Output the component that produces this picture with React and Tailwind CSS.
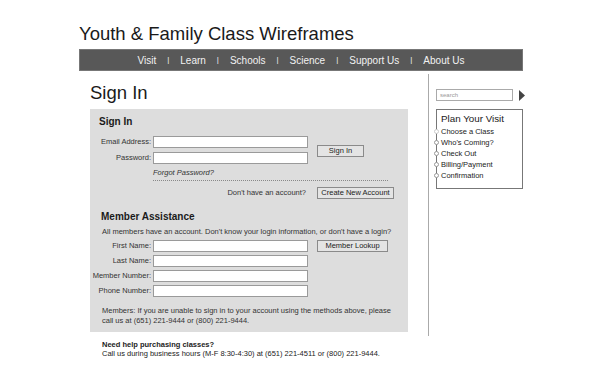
export default function App() {
  const navItems = ['Visit', 'Learn', 'Schools', 'Science', 'Support Us', 'About Us'];
  const steps = ['Choose a Class', "Who's Coming?", 'Check Out', 'Billing/Payment', 'Confirmation'];
  const inputCls = 'w-[155px] h-[12px] bg-white border border-[#9a9a9a]';
  const btnCls = 'h-[12px] bg-[#e4e4e4] border border-[#8a8a8a] text-[7.5px] leading-[10px] text-[#222] whitespace-nowrap text-center';

  return (
    <div className="w-[602px] h-[377px] bg-white text-[#222] overflow-hidden" style={{ fontFamily: '"Liberation Sans", Arial, sans-serif' }}>
      <div className="ml-[79px] w-[444px]">
        <h1 className="pt-[23px] text-[18.5px] leading-[22px] text-[#1a1a1a]">Youth &amp; Family Class Wireframes</h1>

        <nav className="mt-[4px] h-[22px] bg-[#585858] border border-[#777] flex items-center justify-center text-[10px] text-[#f2f2f2]">
          {navItems.map((item, i) => (
            <span key={item} className="flex items-center">
              {i > 0 && <span className="mx-[11px] text-[8px]">|</span>}
              {item}
            </span>
          ))}
        </nav>

        <div className="flex">
          {/* main column */}
          <div className="w-[349px] shrink-0 pl-[11px]">
            <h2 className="mt-[10px] text-[18.5px] leading-[24px] text-[#1a1a1a]">Sign In</h2>

            <div className="mt-[4px] w-[318px] h-[223px] bg-[#dddddd] pt-[7px] text-[7.5px] leading-[10px] text-[#333]">
              <h3 className="ml-[9px] text-[10px] font-bold leading-[12px] text-[#1a1a1a]">Sign In</h3>

              <div className="mt-[8px] flex">
                <div className="flex flex-col gap-[4px]">
                  <div className="flex items-center">
                    <span className="w-[63px] text-right pr-[2px]">Email Address:</span>
                    <div className={inputCls}></div>
                  </div>
                  <div className="flex items-center">
                    <span className="w-[63px] text-right pr-[2px]">Password:</span>
                    <div className={inputCls}></div>
                  </div>
                </div>
                <div className="ml-[9px] mt-[9px]">
                  <div className={btnCls + ' w-[47px]'}>Sign In</div>
                </div>
              </div>

              <div className="ml-[63px] mt-[4px] italic">Forgot Password?</div>
              <div className="ml-[63px] mt-[2px] w-[235px] border-t border-dotted border-[#888]"></div>

              <div className="mt-[6px] flex items-center">
                <span className="w-[216px] text-right">Don't have an account?</span>
                <div className={btnCls + ' ml-[11px] w-[77px]'}>Create New Account</div>
              </div>

              <h3 className="ml-[11px] mt-[12px] text-[10px] font-bold leading-[12px] text-[#1a1a1a]">Member Assistance</h3>
              <p className="ml-[12px] mt-[4px]">All members have an account. Don't know your login information, or don't have a login?</p>

              <div className="mt-[3px] flex">
                <div className="flex flex-col gap-[3px]">
                  {['First Name:', 'Last Name:', 'Member Number:', 'Phone Number:'].map((l) => (
                    <div key={l} className="flex items-center">
                      <span className="w-[63px] text-right pr-[2px] whitespace-nowrap">{l}</span>
                      <div className={inputCls}></div>
                    </div>
                  ))}
                </div>
                <div className="ml-[9px]">
                  <div className={btnCls + ' w-[71px]'}>Member Lookup</div>
                </div>
              </div>

              <p className="ml-[12px] mt-[9px] w-[290px]">
                Members: If you are unable to sign in to your account using the methods above, please call us at (651) 221-9444 or (800) 221-9444.
              </p>
            </div>

            <div className="ml-[12px] mt-[8px] text-[7.5px] leading-[9px] text-[#222]">
              <div className="font-bold">Need help purchasing classes?</div>
              <div>Call us during business hours (M-F 8:30-4:30) at (651) 221-4511 or (800) 221-9444.</div>
            </div>
          </div>

          {/* sidebar */}
          <div className="mt-[3px] h-[262px] shrink-0 border-l border-[#aaaaaa] pl-[7px] pt-[15px]">
            <div className="flex items-center">
              <div className="w-[77px] h-[12px] bg-white border border-[#aaa] pl-[3px] text-[6px] leading-[10px] text-[#999]">search</div>
              <svg width="6" height="11" viewBox="0 0 6 11" className="ml-[6px]">
                <polygon points="0,0 6,5.5 0,11" fill="#444" />
              </svg>
            </div>

            <div className="mt-[8px] w-[87px] h-[80px] border border-[#777] pl-[4px] pt-[3px]">
              <div className="text-[9.8px] leading-[12px] text-[#1a1a1a]">Plan Your Visit</div>
              <ul className="mt-[1px] text-[7.5px] leading-[11px] text-[#222]">
                {steps.map((s, i) => (
                  <li key={s} className="relative">
                    <span className={'absolute left-[-7px] top-[3px] w-[5px] h-[5px] rounded-full border bg-white ' + (i === 0 ? 'border-[#ccc]' : 'border-[#999]')}></span>
                    {s}
                  </li>
                ))}
              </ul>
            </div>
          </div>
        </div>
      </div>
    </div>
  );
}
